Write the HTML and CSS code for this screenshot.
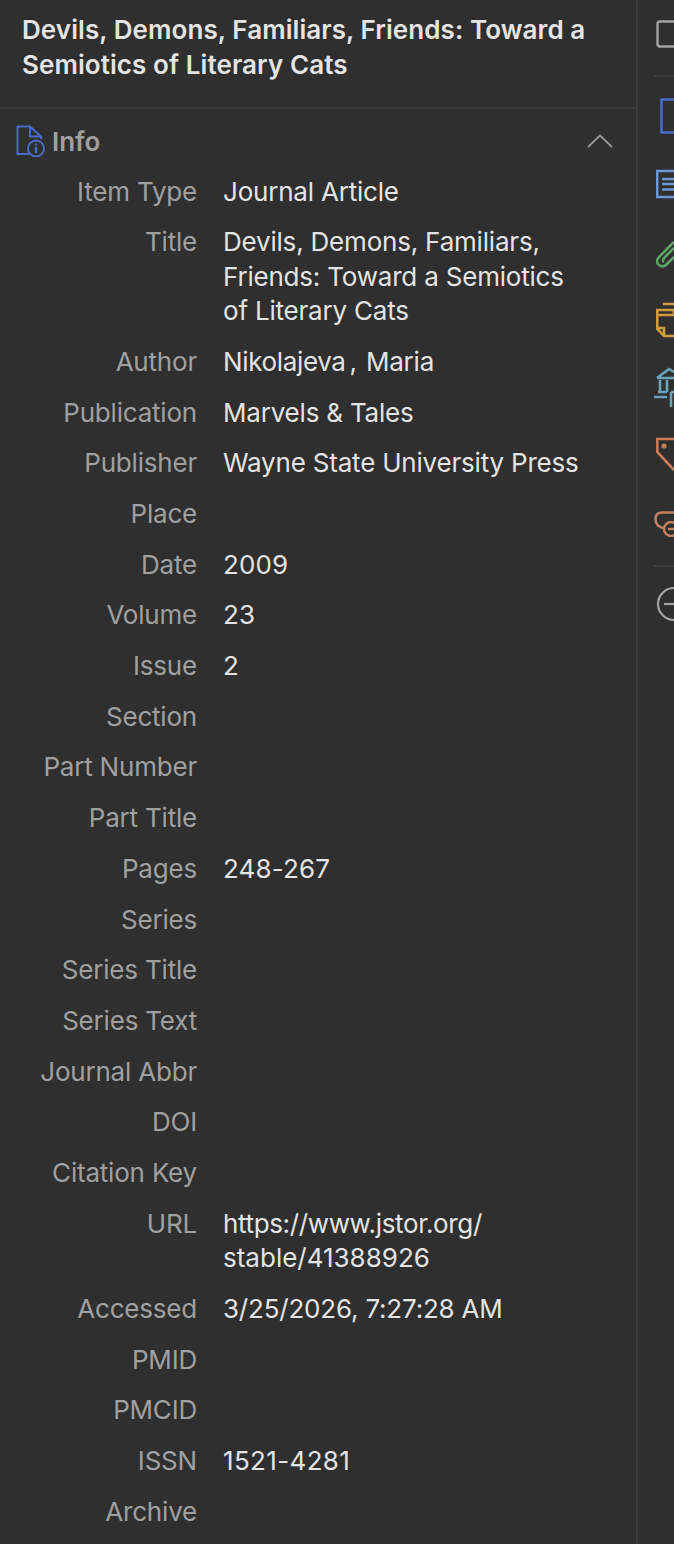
FILE: index.html
```html
<!DOCTYPE html>
<html lang="en">
<head>
<meta charset="utf-8">
<title>Info</title>
<link rel="stylesheet" href="styles.css">
</head>
<body>
<div class="app">
  <main class="pane">
    <header class="head"><h1>Devils, Demons, Familiars, Friends: Toward a Semiotics of Literary Cats</h1></header>
    <section class="section">
      <div class="section-head">
        <svg class="info-icon" width="32" height="32" viewBox="0 0 32 32" fill="none" stroke="#4a6cc9" stroke-width="2"><path d="M13 29H1.5V1.5H14L25 11.5V14"/><path d="M14 1.5V11.5H25"/><circle cx="20" cy="23.5" r="8"/><path d="M20 22v6M20 18.5v2" stroke-width="2.4"/></svg>
        <h2>Info</h2>
        <svg class="chevron" width="26" height="14" viewBox="0 0 26 14" fill="none" stroke="#999" stroke-width="1.8"><path d="M1 13L13 1.5L25 13"/></svg>
      </div>
      <dl class="fields">
        <dt>Item Type</dt><dd>Journal Article</dd>
        <dt>Title</dt><dd>Devils, Demons, Familiars, Friends: Toward a Semiotics of Literary Cats</dd>
        <dt>Author</dt><dd class="creator"><span class="surname">Nikolajeva</span><span>,</span><span class="given">Maria</span></dd>
        <dt>Publication</dt><dd>Marvels &amp; Tales</dd>
        <dt>Publisher</dt><dd>Wayne State University Press</dd>
        <dt>Place</dt><dd></dd>
        <dt>Date</dt><dd class="num">2009</dd>
        <dt>Volume</dt><dd class="num">23</dd>
        <dt>Issue</dt><dd class="num">2</dd>
        <dt>Section</dt><dd></dd>
        <dt>Part Number</dt><dd></dd>
        <dt>Part Title</dt><dd></dd>
        <dt>Pages</dt><dd class="num">248-267</dd>
        <dt>Series</dt><dd></dd>
        <dt>Series Title</dt><dd></dd>
        <dt>Series Text</dt><dd></dd>
        <dt>Journal Abbr</dt><dd></dd>
        <dt>DOI</dt><dd></dd>
        <dt>Citation Key</dt><dd></dd>
        <dt>URL</dt><dd><span class="url-host">https://www.jstor.org/</span><br><span class="url-path">stable/41388926</span></dd>
        <dt>Accessed</dt><dd>3/25/2026, 7:27:28 AM</dd>
        <dt>PMID</dt><dd></dd>
        <dt>PMCID</dt><dd></dd>
        <dt>ISSN</dt><dd class="num num-wide">1521-4281</dd>
        <dt>Archive</dt><dd></dd>
      </dl>
    </section>
  </main>
  <aside class="rail">
    <svg class="ico ico-top" width="20" height="28" viewBox="0 0 20 28" fill="none" stroke="#a3a3a3" stroke-width="2.4"><path d="M20 1.5H4Q1.5 1.5 1.5 4V24Q1.5 26.5 4 26.5H20"/></svg>
    <div class="rule"></div>
    <svg class="ico ico-item" width="15" height="36" viewBox="0 0 15 36" fill="none" stroke="#4a6cc9" stroke-width="2.6"><path d="M15 1.5H1.5V34.5H15"/></svg>
    <svg class="ico ico-note" width="18" height="30" viewBox="0 0 18 30" fill="none" stroke="#6d98d6" stroke-width="2.4"><path d="M18 2H1.2V28H18"/><path d="M6 10H18M6 15H18M6 20.5H18"/></svg>
    <svg class="ico ico-clip" width="18" height="30" viewBox="0 0 18 30" fill="none" stroke="#5ba564" stroke-width="2.6"><path d="M18 4L3 19Q-1 24 3 27Q7 30 11 26L18 19"/><path d="M18 10L8 20Q6 23 8 24"/></svg>
    <svg class="ico ico-tag" width="18" height="38" viewBox="0 0 18 38" fill="none" stroke="#d19a3d" stroke-width="2.6"><path d="M7 4H18M1.3 10H18V15H1.3zM1.3 10V29L8 36H18M8 36V28H1.3"/></svg>
    <svg class="ico ico-lib" width="20" height="40" viewBox="0 0 20 40" fill="none" stroke="#6ba3bd" stroke-width="2.6"><path d="M3 11L15 2L20 5M3 11H20M6 13V25M13 13V25M4 25H13M0 30H13"/><path d="M17 25H20M17 25V40"/></svg>
    <svg class="ico ico-label" width="18" height="36" viewBox="0 0 18 36" fill="none" stroke="#c97a55" stroke-width="2.6"><path d="M18 2H1.3V15L18 33"/><circle cx="8" cy="9" r="2.6" fill="#c97a55" stroke="none"/></svg>
    <svg class="ico ico-rel" width="20" height="26" viewBox="0 0 20 26" fill="none" stroke="#c4805e" stroke-width="2.4"><path d="M20 1.5H8Q1.5 1.5 1.5 8Q1.5 15 9 17"/><circle cx="17" cy="18" r="7"/><path d="M14 18H20"/></svg>
    <div class="rule rule-low"></div>
    <svg class="ico ico-minus" width="18" height="36" viewBox="0 0 18 36" fill="none" stroke="#a3a3a3" stroke-width="2.2"><path d="M18 2A16 16 0 0 0 18 34"/><path d="M8 18H18"/></svg>
  </aside>
</div>
</body>
</html>
```
FILE: styles.css
```css
html, body {
  margin: 0;
  padding: 0;
  height: 100%;
  background: #2f2f2f;
  overflow: hidden;
}
.app {
  display: flex;
  height: 1544px;
  width: 674px;
  font-family: Inter, "Liberation Sans", sans-serif;
  overflow: hidden;
}
.pane {
  flex: none;
  box-sizing: border-box;
  border-right: 2px solid #3c3c3c;
  width: 638px;
}
.head {
  padding: 12px 40px 25px 22px;
  border-bottom: 2px solid #3c3c3c;
}
h1 {
  margin: 0;
  font-size: 26px;
  font-weight: 600;
  line-height: 35px;
  letter-spacing: 0.08px;
  color: #e4e4e4;
}
.section-head {
  display: flex;
  align-items: center;
  padding: 14px 23px 0 16px;
  height: 36px;
}
.info-icon { flex: none; margin-right: 4px; }
h2 {
  margin: 0;
  font-size: 26px;
  font-weight: 600;
  line-height: 35px;
  color: #a0a0a0;
  flex: 1;
}
.fields {
  display: grid;
  grid-template-columns: 197px 1fr;
  column-gap: 26px;
  row-gap: 16.2px;
  margin: 0;
  padding: 15.6px 50px 0 0;
  font-size: 26px;
  line-height: 34.5px;
  letter-spacing: -0.2px;
}
dt { text-align: right; color: #a0a0a0; white-space: nowrap; }
dd { margin: 0; color: #e4e4e4; min-height: 34.5px; }
dd.num { letter-spacing: 0.15px; }
dd.num-wide { letter-spacing: 0.35px; }
.url-host { letter-spacing: -0.36px; }
.url-path { letter-spacing: 0; }
.creator { display: flex; gap: 4px; }
.surname { letter-spacing: -0.35px; }
.given { margin-left: 5px; }
.rail {
  flex: 1;
  display: flex;
  flex-direction: column;
  align-items: flex-start;
  min-width: 0;
  overflow: hidden;
}
.ico { flex: none; display: block; margin-left: 18px; }
.ico-top { margin-top: 20px; }
.rule { height: 2px; width: 36px; background: #3c3c3c; margin: 27px 0 0 16px; flex: none; }
.ico-item { margin-top: 21px; margin-left: 22px; }
.ico-note { margin-top: 35px; }
.ico-clip { margin-top: 39px; }
.ico-tag { margin-top: 32px; }
.ico-lib { margin-top: 29px; margin-left: 16px; }
.ico-label { margin-top: 30px; }
.ico-rel { margin-top: 38px; margin-left: 16px; }
.rule-low { margin-top: 28px; }
.ico-minus { margin-top: 19px; }
```
